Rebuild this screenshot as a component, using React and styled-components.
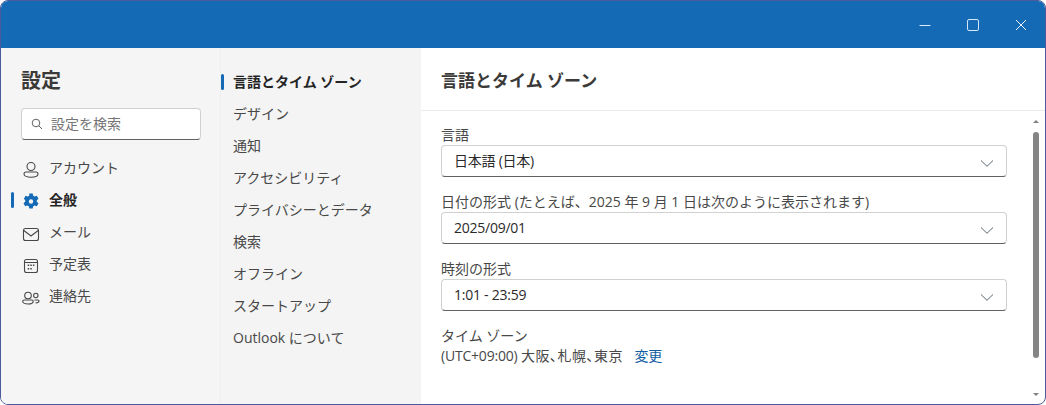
import React from "react";
import styled, { createGlobalStyle } from "styled-components";

const Global = createGlobalStyle`
  html, body { margin: 0; padding: 0; background: #fff; }
  body { font-family: "Open Sans", "Noto Sans CJK JP", sans-serif; color: #323130; overflow: hidden; }
  * { box-sizing: border-box; }
`;

const Window = styled.div`
  width: 1046px;
  height: 405px;
  border: 1px solid #4a5a9a;
  border-radius: 8px;
  overflow: hidden;
  display: flex;
  flex-direction: column;
  background: #fff;
`;
const TitleBar = styled.div`
  height: 47px;
  flex: none;
  background: #156ab6;
  display: flex;
  justify-content: flex-end;
  align-items: center;
`;
const WinButton = styled.div`
  width: 48px;
  height: 47px;
  display: flex;
  align-items: center;
  justify-content: center;
`;
const Body = styled.div`
  flex: 1;
  min-height: 0;
  display: flex;
`;
const NavPane = styled.nav`
  width: 219px;
  flex: none;
  background: #f5f5f5;
  padding: 19px 19px 0 20px;
`;
const Heading = styled.h1`
  margin: 0;
  font-size: 20px;
  line-height: 28px;
  font-weight: 700;
  color: #3b3a39;
`;
const Search = styled.div`
  margin-top: 13px;
  height: 32px;
  width: 180px;
  background: #fff;
  border: 1px solid #d1d1d1;
  border-bottom-color: #616161;
  border-radius: 4px;
  display: flex;
  align-items: center;
  padding-left: 9px;
  gap: 8px;
  font-size: 14px;
  color: #757575;
`;
const SearchText = styled.span`
  margin-bottom: 2px;
`;
const NavList = styled.div`
  margin-top: 11px;
  display: flex;
  flex-direction: column;
`;
const NavRow = styled.div`
  position: relative;
  height: 32px;
  display: flex;
  align-items: center;
  gap: 8px;
  font-size: 14px;
  font-weight: ${p => (p.$active ? 700 : 400)};
  color: ${p => (p.$active ? "#242424" : "#484848")};
`;
const IconSlot = styled.span`
  width: 20px;
  height: 20px;
  display: flex;
  align-items: center;
  justify-content: center;
  flex: none;
  svg { overflow: visible; }
`;
const Marker = styled.span`
  position: absolute;
  left: ${p => p.$left}px;
  top: 9px;
  width: 3px;
  height: 16px;
  border-radius: 2px;
  background: #156ab6;
`;
const ListPane = styled.div`
  width: 201px;
  flex: none;
  background: #f4f4f4;
  border-left: 1px solid #efefef;
  padding: 17px 0 0 12px;
  display: flex;
  flex-direction: column;
`;
const ListRow = styled.div`
  position: relative;
  height: 32px;
  display: flex;
  align-items: center;
  font-size: 14px;
  font-weight: ${p => (p.$active ? 700 : 400)};
  color: ${p => (p.$active ? "#242424" : "#484848")};
`;
const Content = styled.main`
  flex: 1;
  min-width: 0;
  display: flex;
  flex-direction: column;
`;
const ContentHeader = styled.header`
  height: 63px;
  flex: none;
  border-bottom: 1px solid #ebebeb;
  padding: 19px 0 0 20px;
  font-size: 17px;
  line-height: 28px;
  font-weight: 700;
  color: #3b3a39;
`;
const ScrollArea = styled.div`
  flex: 1;
  min-height: 0;
  display: flex;
`;
const Form = styled.div`
  flex: 1;
  padding: 14px 0 0 20px;
  display: flex;
  flex-direction: column;
`;
const Field = styled.div`
  display: flex;
  flex-direction: column;
  margin-bottom: 15px;
`;
const Label = styled.div`
  font-size: 14px;
  line-height: 20px;
  color: #484848;
`;
const Select = styled.div`
  width: 566px;
  height: 32px;
  background: #fff;
  border: 1px solid #d1d1d1;
  border-bottom-color: #616161;
  border-radius: 4px;
  display: flex;
  align-items: center;
  justify-content: space-between;
  padding: 0 12px 2px 12px;
  font-size: 14px;
  letter-spacing: -0.25px;
  color: #2a2a2a;
  svg { margin-top: 6px; }
`;
const TimeZone = styled.div`
  font-size: 14px;
  line-height: 20px;
  color: #484848;
  letter-spacing: -0.2px;
  font-feature-settings: "palt";
`;
const Places = styled.span`
  letter-spacing: 0.5px;
`;
const ChangeLink = styled.a`
  color: #115ea3;
  margin-left: 8px;
  letter-spacing: 0;
`;
const ScrollBar = styled.div`
  width: 18px;
  flex: none;
  display: flex;
  flex-direction: column;
  align-items: center;
  padding-top: 9px;
`;
const Arrow = styled.div`
  width: 0;
  height: 0;
  border-left: 3px solid transparent;
  border-right: 3px solid transparent;
  ${p => (p.$down ? "border-top: 3px solid #808080;" : "border-bottom: 3px solid #808080;")}
`;
const Thumb = styled.div`
  width: 6px;
  height: 226px;
  border-radius: 3px;
  background: #858585;
  margin-top: 9px;
`;
const Spacer = styled.div`
  flex: 1;
`;
const BottomArrow = styled.div`
  padding-bottom: 8px;
`;

const Chevron = () => (
  <svg width="14" height="14" viewBox="0 0 14 14" fill="none">
    <path d="M1 4.500 7 10.300l6-5.800" stroke="#5a6670" strokeWidth="1" />
  </svg>
);

const stroke = { fill: "none", stroke: "#484848", strokeWidth: 1.1 };
const size = { width: 20, height: 20, viewBox: "0 0 20 20" };

const icons = {
  user: (
    <svg {...size} {...stroke}>
      <circle cx="10" cy="9.500" r="4" />
      <path d="M5 15h10a2 2 0 0 1 2 2c0 2-3 3.200-7 3.200S3 19 3 17a2 2 0 0 1 2-2z" />
    </svg>
  ),
  gear: (
    <svg {...size}>
      <path
        transform="translate(1 3.500)"
        fill="#156ab6"
        fillRule="evenodd"
        d="M7.300 1h3.400l.5 2.200 1.400.8 2.200-.7 1.700 2.900-1.700 1.500v1.600l1.700 1.500-1.700 2.900-2.200-.7-1.400.8-.5 2.200H7.300l-.5-2.200-1.400-.8-2.200.7-1.700-2.900 1.700-1.500V7.700L1.900 6.200l1.700-2.900 2.200.7 1.400-.8zM9 6.800a2.200 2.200 0 1 0 0 4.400 2.200 2.200 0 0 0 0-4.400z"
      />
    </svg>
  ),
  mail: (
    <svg {...size} {...stroke}>
      <rect x="2.500" y="7.500" width="15" height="12" rx="2" />
      <path d="M2.800 9.500 10 15l7.200-5.500" />
    </svg>
  ),
  calendar: (
    <svg {...size}>
      <rect x="3.500" y="6.500" width="13" height="13" rx="2" fill="none" stroke="#484848" strokeWidth="1.100" />
      <path d="M3.500 9.500h13" stroke="#484848" strokeWidth="1.100" />
      <path
        fill="#484848"
        d="M6.700 11.500h1.500V13H6.700zM9.300 11.500h1.500V13H9.300zM11.900 11.500h1.500V13h-1.500zM6.700 15h1.500v1.500H6.700zM9.300 15h1.500v1.500H9.300z"
      />
    </svg>
  ),
  contacts: (
    <svg {...size} {...stroke}>
      <circle cx="7" cy="10.500" r="3.300" />
      <circle cx="14.800" cy="10.500" r="2.200" />
      <path d="M3 15h8c.7 0 1.200.5 1.200 1.200 0 2-2.500 2.800-5.200 2.800s-5.300-.8-5.300-2.800C1.700 15.500 2.300 15 3 15z" />
      <path d="M13.500 15h3.300c.7 0 1.200.4 1.200 1.100 0 1.300-1.500 1.900-3.500 1.900" />
    </svg>
  ),
};

const navItems = [
  ["user", "アカウント"],
  ["gear", "全般", true],
  ["mail", "メール"],
  ["calendar", "予定表"],
  ["contacts", "連絡先"],
];

const listItems = [
  "言語とタイム ゾーン",
  "デザイン",
  "通知",
  "アクセシビリティ",
  "プライバシーとデータ",
  "検索",
  "オフライン",
  "スタートアップ",
  "Outlook について",
];

const fields = [
  ["言語", "日本語 (日本)"],
  ["日付の形式 (たとえば、2025 年 9 月 1 日は次のように表示されます)", "2025/09/01"],
  ["時刻の形式", "1:01 - 23:59"],
];

export default function App() {
  return (
    <>
      <Global />
      <Window>
        <TitleBar>
          <WinButton>
            <svg width="12" height="12" viewBox="0 0 12 12">
              <path d="M0.500 6.500h11" stroke="#dcebf8" strokeWidth="1" />
            </svg>
          </WinButton>
          <WinButton>
            <svg width="12" height="12" viewBox="0 0 12 12" fill="none">
              <rect x="0.500" y="0.500" width="11" height="11" rx="1.500" stroke="#d5e8f8" strokeWidth="1" />
            </svg>
          </WinButton>
          <WinButton>
            <svg width="12" height="12" viewBox="0 0 12 12">
              <path d="M1 1l10 10M11 1 1 11" stroke="#f0f6fc" strokeWidth="1" />
            </svg>
          </WinButton>
        </TitleBar>
        <Body>
          <NavPane>
            <Heading>設定</Heading>
            <Search>
              <svg width="12" height="12" viewBox="0 0 12 12" fill="none">
                <circle cx="5" cy="5" r="3.800" stroke="#616161" />
                <path d="M7.800 7.800 11 11" stroke="#616161" />
              </svg>
              <SearchText>設定を検索</SearchText>
            </Search>
            <NavList>
              {navItems.map(([icon, text, active]) => (
                <NavRow key={text} $active={active}>
                  {active && <Marker $left={-10} />}
                  <IconSlot>{icons[icon]}</IconSlot>
                  {text}
                </NavRow>
              ))}
            </NavList>
          </NavPane>
          <ListPane>
            {listItems.map((text, i) => (
              <ListRow key={text} $active={i === 0}>
                {i === 0 && <Marker $left={-12} />}
                {text}
              </ListRow>
            ))}
          </ListPane>
          <Content>
            <ContentHeader>言語とタイム ゾーン</ContentHeader>
            <ScrollArea>
              <Form>
                {fields.map(([label, value]) => (
                  <Field key={label}>
                    <Label>{label}</Label>
                    <Select>
                      {value}
                      <Chevron />
                    </Select>
                  </Field>
                ))}
                <Label>タイム ゾーン</Label>
                <TimeZone>
                  (UTC+09:00) <Places>大阪、札幌、東京</Places> <ChangeLink>変更</ChangeLink>
                </TimeZone>
              </Form>
              <ScrollBar>
                <Arrow />
                <Thumb />
                <Spacer />
                <BottomArrow>
                  <Arrow $down />
                </BottomArrow>
              </ScrollBar>
            </ScrollArea>
          </Content>
        </Body>
      </Window>
    </>
  );
}
